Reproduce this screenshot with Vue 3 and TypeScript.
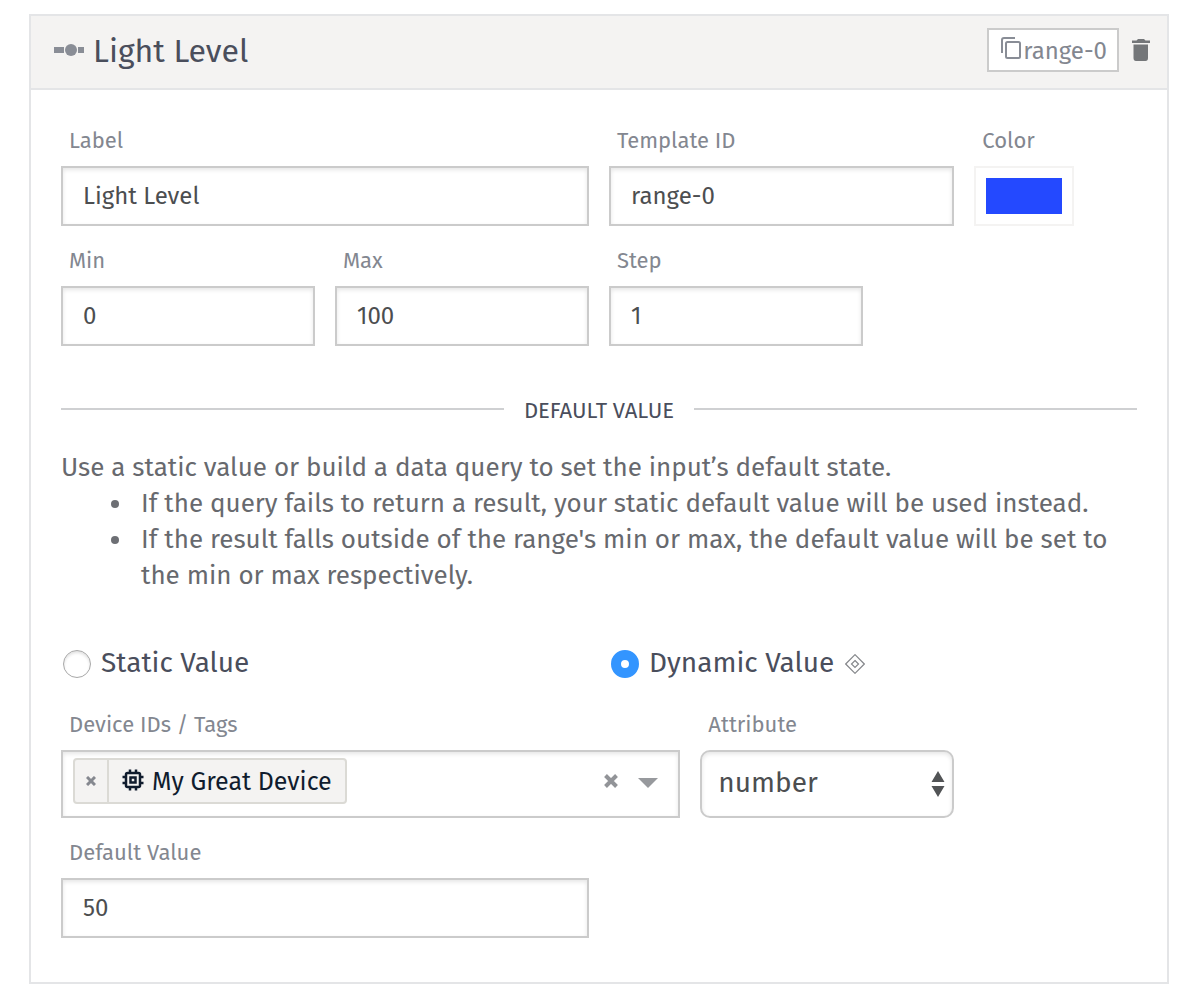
<script setup lang="ts">
import { ref } from 'vue'

const label = ref('Light Level')
const templateId = ref('range-0')
const color = ref('#2449ff')
const min = ref('0')
const max = ref('100')
const step = ref('1')
const mode = ref<'static' | 'dynamic'>('dynamic')
const devices = ref<string[]>(['My Great Device'])
const attribute = ref('number')
const defaultValue = ref('50')

function removeDevice(name: string): void {
  devices.value = devices.value.filter((d) => d !== name)
}
</script>

<template>
  <main class="page">
    <section class="card">
      <header class="card-header">
        <svg class="range-icon" viewBox="0 0 30 12" aria-hidden="true">
          <rect x="0" y="3" width="10" height="6" />
          <circle cx="17" cy="6" r="6" />
          <rect x="24" y="3" width="6" height="6" />
        </svg>
        <h1 class="title">{{ label }}</h1>
        <button type="button" class="copy" aria-label="Copy template ID">
          <svg class="copy-icon" viewBox="0 0 20 22" aria-hidden="true">
            <path d="M1 16V3Q1 1 3 1H14" />
            <rect x="5" y="5" width="14" height="16" rx="1.5" />
          </svg>
          <span>{{ templateId }}</span>
        </button>
        <button type="button" class="trash" aria-label="Delete input">
          <svg class="trash-icon" viewBox="0 0 18 22" aria-hidden="true">
            <path d="M0 1.5H4.5L6 0H12L13.500 1.500H18V4H0ZM1.500 5.500H16V19Q16 22 13.500 22H4Q1.500 22 1.500 19Z" />
          </svg>
        </button>
      </header>

      <form class="body" @submit.prevent>
        <div class="grid">
          <div class="field span-6">
            <label for="label">Label</label>
            <input id="label" v-model="label" class="text" type="text" />
          </div>
          <div class="field span-4">
            <label for="template-id">Template ID</label>
            <input id="template-id" v-model="templateId" class="text" type="text" />
          </div>
          <div class="field span-2">
            <label for="color">Color</label>
            <input id="color" v-model="color" class="color" type="color" />
          </div>
          <div class="field span-3">
            <label for="min">Min</label>
            <input id="min" v-model="min" class="text" type="text" />
          </div>
          <div class="field span-3">
            <label for="max">Max</label>
            <input id="max" v-model="max" class="text" type="text" />
          </div>
          <div class="field span-3">
            <label for="step">Step</label>
            <input id="step" v-model="step" class="text" type="text" />
          </div>
        </div>

        <h2 class="divider">Default Value</h2>

        <div class="help">
          <p>Use a static value or build a data query to set the input’s default state.</p>
          <ul>
            <li>If the query fails to return a result, your static default value will be used instead.</li>
            <li>If the result falls outside of the range's min or max, the default value will be set to the min or max respectively.</li>
          </ul>
        </div>

        <div class="grid modes">
          <div class="mode span-6">
            <input id="static" v-model="mode" type="radio" name="mode" value="static" />
            <label for="static">Static Value</label>
          </div>
          <div class="mode span-6">
            <input id="dynamic" v-model="mode" type="radio" name="mode" value="dynamic" />
            <label for="dynamic">Dynamic Value</label>
            <svg class="diamond" viewBox="0 0 20 20" aria-hidden="true">
              <path d="M10 0.700L19.300 10L10 19.300L0.700 10Z" />
              <path d="M10 6.500L13.500 10L10 13.500L6.500 10Z" />
            </svg>
          </div>
        </div>

        <div class="grid">
          <div class="field span-7">
            <label for="devices">Device IDs / Tags</label>
            <div class="multi">
              <span v-for="device in devices" :key="device" class="tag">
                <button type="button" class="tag-remove" :aria-label="'Remove ' + device" @click="removeDevice(device)">
                  <svg class="tag-x" viewBox="0 0 10 10" aria-hidden="true"><path d="M1 1L9 9M9 1L1 9" /></svg>
                </button>
                <span class="tag-name">
                  <svg class="chip" viewBox="0 0 22 22" aria-hidden="true">
                    <rect x="4" y="4" width="14" height="14" rx="1.500" />
                    <rect x="8.500" y="8.500" width="5" height="5" />
                    <path d="M8 0.500V4M14 0.500V4M8 18V21.500M14 18V21.500M0.500 8H4M0.500 14H4M18 8H21.500M18 14H21.500" />
                  </svg>
                  {{ device }}
                </span>
              </span>
              <input id="devices" class="multi-input" type="text" />
              <button type="button" class="clear" aria-label="Clear all" @click="devices = []">
                <svg class="clear-x" viewBox="0 0 14 14" aria-hidden="true"><path d="M1.500 1.500L12.500 12.500M12.500 1.500L1.500 12.500" /></svg>
              </button>
              <svg class="caret" viewBox="0 0 20 10" aria-hidden="true"><path d="M0 0H20L10 10Z" /></svg>
            </div>
          </div>
          <div class="field span-3">
            <label for="attribute">Attribute</label>
            <div class="select">
              <select id="attribute" v-model="attribute">
                <option value="number">number</option>
              </select>
              <svg class="arrows" viewBox="0 0 14 26" aria-hidden="true">
                <path d="M7 0L13.500 11H0.500ZM0.500 15H13.500L7 26Z" />
              </svg>
            </div>
          </div>
          <div class="field span-6">
            <label for="default-value">Default Value</label>
            <input id="default-value" v-model="defaultValue" class="text" type="text" />
          </div>
        </div>
      </form>
    </section>
  </main>
</template>

<style>
body {
  margin: 0;
  background: #fff;
}
</style>

<style scoped>
.page {
  padding: 14px 31px 16px 29px;
  font-family: 'Fira Sans', 'Noto Sans', sans-serif;
  font-weight: 400;
  color: #4a4e5c;
}

.page *,
.page {
  box-sizing: border-box;
}

input,
select,
button {
  margin: 0;
  font: inherit;
  color: inherit;
}

button {
  padding: 0;
  border: 0;
  background: none;
  cursor: pointer;
}

svg {
  display: block;
  flex: none;
}

.card {
  border: 2px solid #e4e5e7;
}

.card-header {
  display: flex;
  align-items: center;
  height: 74px;
  padding: 0 17px 2px 23px;
  border-bottom: 2px solid #e4e5e7;
  background: #f4f3f2;
}

.range-icon,
.copy,
.trash {
  margin-bottom: 2px;
}

.range-icon {
  width: 30px;
  height: 12px;
  fill: #898d96;
}

.title {
  flex: 1;
  margin: 0 0 0 9px;
  font-size: 32px;
  font-weight: 400;
  line-height: 44px;
}

.copy {
  display: flex;
  align-items: center;
  gap: 2px;
  height: 44px;
  padding: 2px 10px 0 12px;
  border: 2px solid #cbcbcb;
  background: #fff;
  color: #838790;
  font-size: 24px;
  line-height: 38px;
}

.copy-icon {
  width: 20px;
  height: 22px;
  margin-bottom: 6px;
  fill: none;
  stroke: #898d96;
  stroke-width: 2;
}

.trash {
  margin-left: 13px;
}

.trash-icon {
  width: 18px;
  height: 22px;
  fill: #747679;
}

.body {
  padding: 37px 30px 44px;
}

.grid {
  display: grid;
  grid-template-columns: repeat(12, minmax(0, 1fr));
  gap: 21px 20px;
}

.span-2 { grid-column: span 2; }
.span-3 { grid-column: span 3; }
.span-4 { grid-column: span 4; }
.span-6 { grid-column: span 6; }
.span-7 { grid-column: span 7; }

.field label {
  display: block;
  margin-bottom: 11px;
  padding-left: 8px;
  color: #838790;
  font-size: 22px;
  line-height: 28px;
}

.text {
  display: block;
  width: 100%;
  height: 60px;
  padding: 0 20px;
  border: 2px solid #cbcbcb;
  border-radius: 0;
  background: #fff;
  box-shadow: inset 0 2px 4px rgba(0, 0, 0, 0.1);
  color: #4c4e50;
  font-size: 24px;
}

.color {
  display: block;
  width: 100px;
  height: 60px;
  padding: 10px;
  border: 2px solid #f4f3f2;
  background: #fff;
  appearance: none;
}

.color::-webkit-color-swatch-wrapper {
  padding: 0;
}

.color::-webkit-color-swatch {
  border: 0;
  border-radius: 0;
}

.divider {
  display: flex;
  align-items: center;
  gap: 20px;
  margin: 51px 0 25px;
  font-size: 22px;
  font-weight: 400;
  line-height: 28px;
  text-transform: uppercase;
}

.divider::before,
.divider::after {
  flex: 1;
  height: 2px;
  margin-bottom: 4px;
  background: #cfd0d2;
  content: '';
}

.help {
  color: #67696e;
  font-size: 26px;
  line-height: 36px;
}

.help p {
  margin: 0;
}

.help ul {
  margin: 0;
  padding-left: 50px;
  list-style: none;
}

.help li {
  display: flex;
  align-items: flex-start;
  gap: 22px;
}

.help li::before {
  flex: none;
  width: 8px;
  height: 8px;
  margin-top: 14px;
  border-radius: 50%;
  background: #6d6f74;
  content: '';
}

.modes {
  margin: 51px 0 30px;
}

.mode {
  display: flex;
  align-items: center;
  padding-left: 2px;
  font-size: 28px;
  line-height: 36px;
}

.mode input {
  flex: none;
  width: 28px;
  height: 28px;
  margin: 2px 10px 0 0;
  border: 1px solid #a8a8a8;
  border-radius: 50%;
  background: #fff;
  box-shadow: inset 0 2px 3px rgba(0, 0, 0, 0.12);
  appearance: none;
}

.mode input:checked {
  border: 10px solid #3395ff;
  box-shadow: none;
}

.diamond {
  width: 20px;
  height: 20px;
  margin: 2px 0 0 11px;
  fill: none;
  stroke: #85878b;
  stroke-width: 1.2;
}

.multi {
  display: flex;
  align-items: center;
  height: 68px;
  padding: 0 20px 6px 10px;
  border: 2px solid #cbcbcb;
  box-shadow: inset 0 2px 4px rgba(0, 0, 0, 0.1);
}

.tag {
  display: flex;
  flex: none;
  height: 46px;
  border: 2px solid #dbdad5;
  border-radius: 4px;
  background: #f4f3f2;
  color: #101c2e;
  font-size: 25px;
}

.tag-remove {
  display: grid;
  place-items: center;
  width: 34px;
  border-right: 2px solid #dbdad5;
}

.tag-x {
  width: 10px;
  height: 10px;
  stroke: #85888f;
  stroke-width: 3;
}

.tag-name {
  display: flex;
  align-items: center;
  gap: 8px;
  padding: 2px 13px 0;
}

.chip {
  width: 22px;
  height: 22px;
  margin-bottom: 4px;
  fill: none;
  stroke: #101c2e;
  stroke-width: 2.5;
}

.multi-input {
  flex: 1;
  min-width: 0;
  border: 0;
  outline: 0;
  background: transparent;
  font-size: 24px;
}

.clear-x {
  width: 14px;
  height: 14px;
  stroke: #929498;
  stroke-width: 4;
}

.caret {
  width: 20px;
  height: 10px;
  margin: 4px 0 0 20px;
  fill: #97999d;
}

.select {
  position: relative;
}

.select select {
  display: block;
  width: 100%;
  height: 68px;
  padding: 0 36px 4px 16px;
  border: 2px solid #cbcbcb;
  border-radius: 10px;
  background: #fff;
  box-shadow: inset 0 2px 4px rgba(0, 0, 0, 0.1);
  color: #4c4e50;
  font-size: 28px;
  appearance: none;
}

.arrows {
  position: absolute;
  top: 21px;
  right: 9px;
  width: 14px;
  height: 26px;
  fill: #525456;
  pointer-events: none;
}
</style>
